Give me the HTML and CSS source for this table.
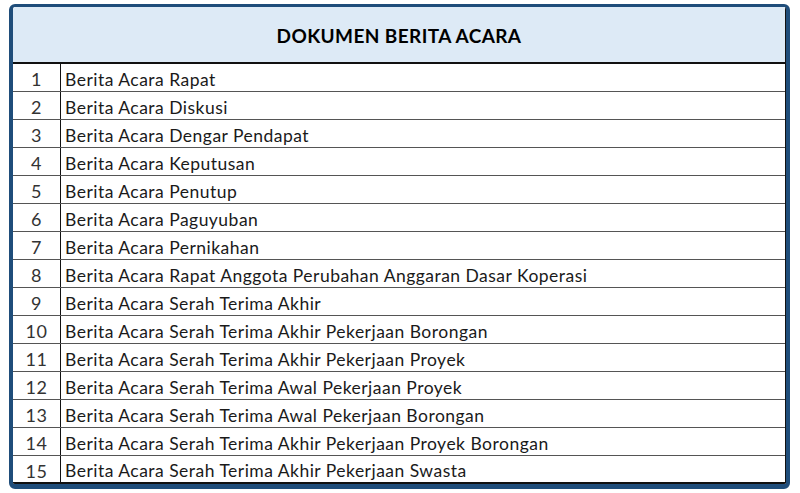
FILE: index.html
```html
<!DOCTYPE html>
<html lang="id">
<head>
<meta charset="utf-8">
<title>Dokumen Berita Acara</title>
<link rel="stylesheet" href="styles.css">
</head>
<body>
<div class="frame">
  <div class="sheet">
    <div class="header">DOKUMEN BERITA ACARA</div>
    <div class="row"><div class="num">1</div><div class="name">Berita Acara Rapat</div></div>
    <div class="row"><div class="num">2</div><div class="name">Berita Acara Diskusi</div></div>
    <div class="row"><div class="num">3</div><div class="name">Berita Acara Dengar Pendapat</div></div>
    <div class="row"><div class="num">4</div><div class="name">Berita Acara Keputusan</div></div>
    <div class="row"><div class="num">5</div><div class="name">Berita Acara Penutup</div></div>
    <div class="row"><div class="num">6</div><div class="name">Berita Acara Paguyuban</div></div>
    <div class="row"><div class="num">7</div><div class="name">Berita Acara Pernikahan</div></div>
    <div class="row"><div class="num">8</div><div class="name">Berita Acara Rapat Anggota Perubahan Anggaran Dasar Koperasi</div></div>
    <div class="row"><div class="num">9</div><div class="name">Berita Acara Serah Terima Akhir</div></div>
    <div class="row"><div class="num">10</div><div class="name">Berita Acara Serah Terima Akhir Pekerjaan Borongan</div></div>
    <div class="row"><div class="num">11</div><div class="name">Berita Acara Serah Terima Akhir Pekerjaan Proyek</div></div>
    <div class="row"><div class="num">12</div><div class="name">Berita Acara Serah Terima Awal Pekerjaan Proyek</div></div>
    <div class="row"><div class="num">13</div><div class="name">Berita Acara Serah Terima Awal Pekerjaan Borongan</div></div>
    <div class="row"><div class="num">14</div><div class="name">Berita Acara Serah Terima Akhir Pekerjaan Proyek Borongan</div></div>
    <div class="row last"><div class="num">15</div><div class="name">Berita Acara Serah Terima Akhir Pekerjaan Swasta</div></div>
  </div>
</div>
</body>
</html>
```

FILE: styles.css
```css
html, body {
  margin: 0;
  padding: 0;
  background: #ffffff;
}

body {
  font-family: Lato, "Noto Sans", sans-serif;
  color: #1a1a1a;
}

.frame {
  margin: 4px 0 0 9px;
  width: 781px;
  box-sizing: border-box;
  border-style: solid;
  border-color: #1f4d7a;
  border-width: 3px 4px 5px 4px;
  border-radius: 6px;
  overflow: hidden;
}

.sheet {
  display: flex;
  flex-direction: column;
  border-right: 1px solid #111;
}

.header {
  height: 57px;
  background: #ddeaf6;
  border-bottom: 2px solid #111;
  box-sizing: border-box;
  display: flex;
  align-items: center;
  justify-content: center;
  font-weight: 700;
  font-size: 19px;
  letter-spacing: 0.4px;
  color: #000;
  padding-top: 2px;
}

.row {
  display: grid;
  grid-template-columns: 48px 1fr;
  height: 28px;
  box-sizing: border-box;
  border-bottom: 1px solid #555;
  font-size: 17.5px;
  padding-top: 3px;
}

.row.last {
  border-bottom: 2px solid #111;
}

.num {
  border-right: 1px solid #111;
  margin-top: -3px;
  padding-top: 3px;
  display: flex;
  align-items: center;
  justify-content: center;
  letter-spacing: 0.5px;
  font-size: 18px;
  color: #333;
}

.name {
  display: flex;
  align-items: center;
  padding-left: 4px;
  letter-spacing: 0.48px;
}
```
